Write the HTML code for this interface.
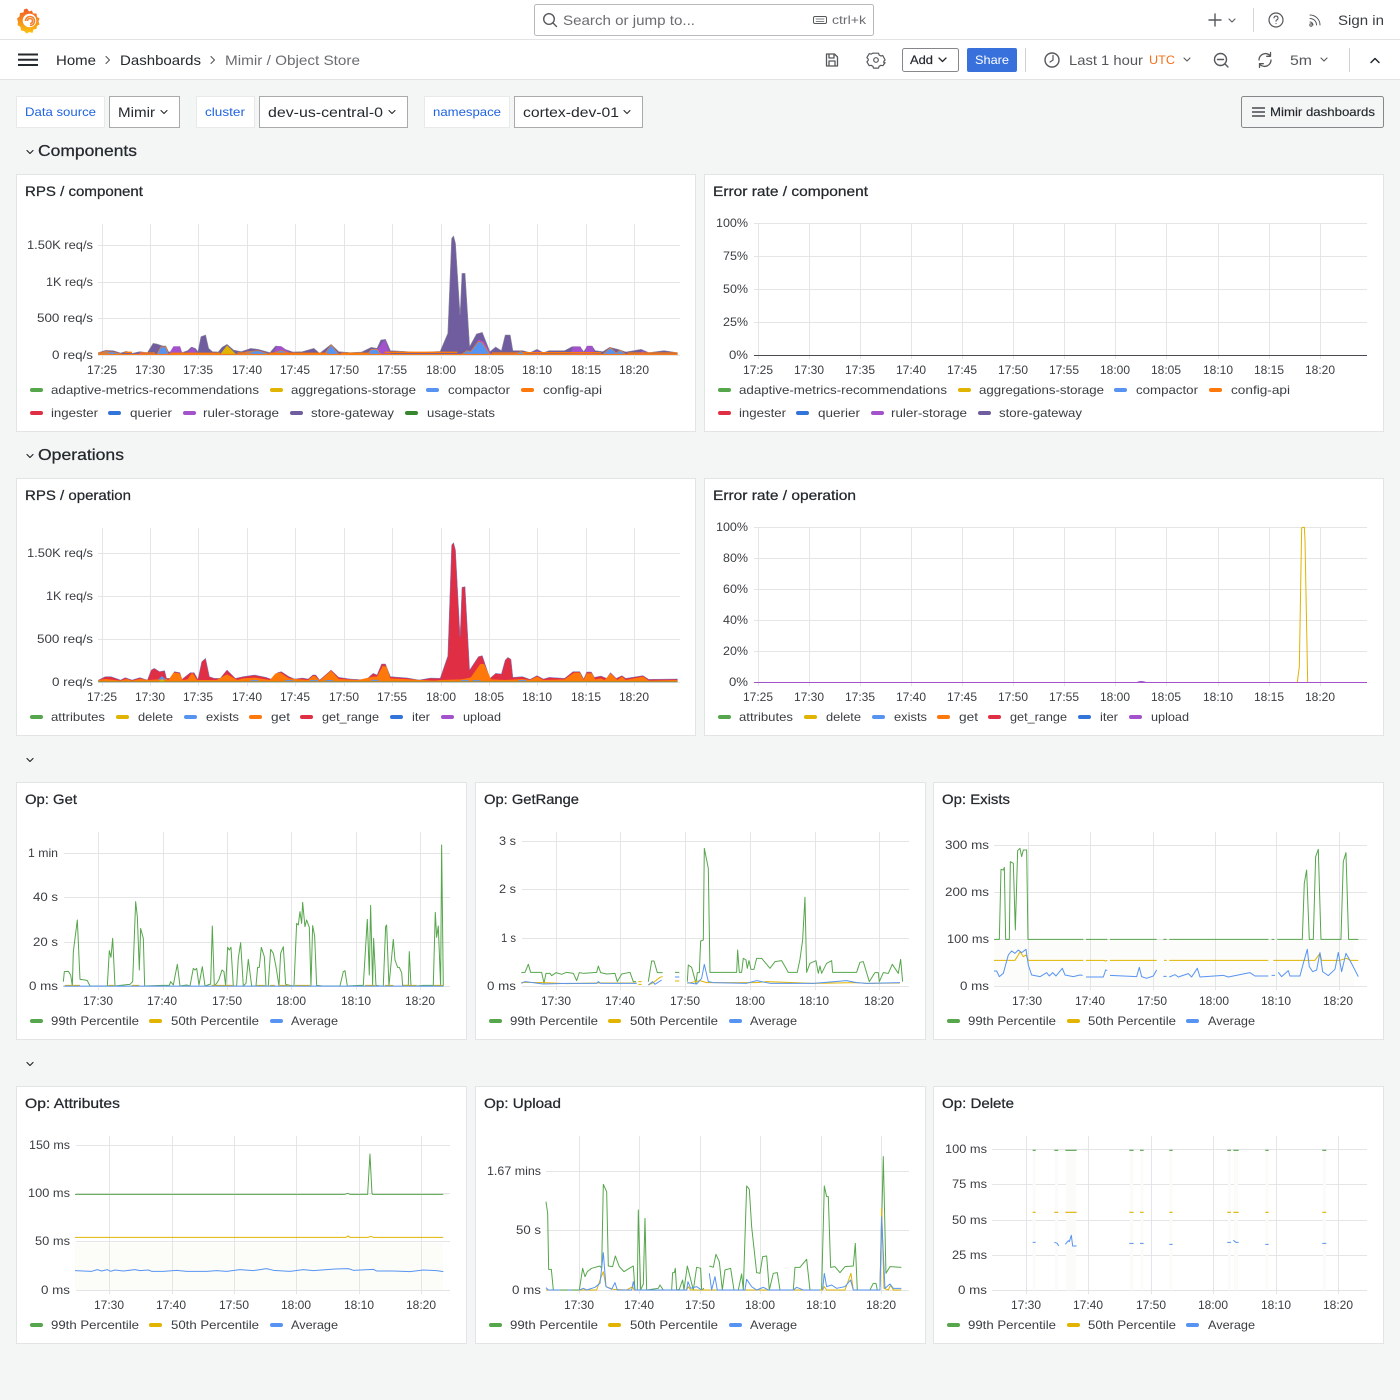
<!DOCTYPE html>
<html><head><meta charset="utf-8"><title>Mimir / Object Store</title>
<style>
html,body{margin:0;padding:0;background:#f4f5f5;width:1400px;height:1400px;overflow:hidden}
svg{display:block;font-family:"Liberation Sans",sans-serif;fill:#24292e;font-size:12px}
.g{fill:none;stroke:#e4e5e6;stroke-width:1;shape-rendering:crispEdges}
.p{fill:#fff;stroke:#e3e4e5;stroke-width:1;shape-rendering:crispEdges}
.t{font-size:14px;stroke:#24292e;stroke-width:.25}
.h{font-size:16px;stroke:#24292e;stroke-width:.25}
.m{font-size:14px}
.s{fill:#6a6d70}
.e{text-anchor:end;fill:#3a3e42}
.c{text-anchor:middle;fill:#3a3e42}
.l{fill:#3a3e42}
.b{fill:#1f62e0}
.k{stroke-width:4;stroke-linecap:round;fill:none}
.i{fill:none;stroke:#55585b;stroke-width:1.4;stroke-linecap:round;stroke-linejoin:round}
.d{fill:none;stroke:#24292e;stroke-width:1.3;stroke-linecap:round;stroke-linejoin:round}
.n path,.n polyline{fill:none;stroke-width:1;vector-effect:non-scaling-stroke;stroke-linejoin:round}
.gr{stroke:#56a64b}.ye{stroke:#e0b400}.bl{stroke:#5794f2}
</style></head><body>
<svg width="1400" height="1400" viewBox="0 0 1400 1400" xmlns="http://www.w3.org/2000/svg">
<defs><linearGradient id="lg" x1="0" y1="1" x2="0" y2="0"><stop offset="0" stop-color="#fcc40f"/><stop offset="1" stop-color="#f05a28"/></linearGradient></defs>

<!-- top bars -->
<rect x="0" y="0" width="1400" height="80" fill="#fff"/>
<rect x="0" y="39" width="1400" height="1" fill="#e3e4e5"/>
<rect x="0" y="79" width="1400" height="1" fill="#e3e4e5"/>

<!-- logo -->
<g transform="translate(2,0)">
<path fill="url(#lg)" d="M25 8.500l2 3 3-1 1 3 3.500 0 .5 3.500 2.500 1.500-1 3 1 3-2.500 1.500-.5 3-3 .5-1 3.500-3-1-3 1.500-2.500-2.500-3-.5-.5-3.500-3-2 .5-3-1-3.500 2.500-2 .5-3.500 3.500-.5 .5-3z"/>
<circle cx="27.500" cy="20.500" r="6.800" fill="#fff"/>
<path d="M23.500 21a4.500 4.500 0 1 1 4.500 4.500M25.500 21a2.500 2.500 0 1 1 2.500 2.500" fill="none" stroke="#f4802a" stroke-width="1.600"/>
</g>

<!-- search -->
<rect x="534.500" y="4.500" width="339" height="31" rx="2" fill="#fff" stroke="#b9babc"/>
<circle cx="549" cy="19" r="5.300" class="i"/><path d="M553 23l3.500 3.500" class="i"/>
<text x="563" y="25" class="m s" textLength="132" lengthAdjust="spacingAndGlyphs">Search or jump to...</text>
<rect x="813.500" y="16.500" width="13" height="7" rx="1.500" class="i" style="stroke-width:1"/><path d="M816 19h8M816 21.500h8" class="i" style="stroke-width:.8"/>
<text x="832" y="24" class="s" textLength="34" lengthAdjust="spacingAndGlyphs">ctrl+k</text>

<!-- top right -->
<path d="M1215 14v12M1209 20h12" class="i"/><path d="M1229 19l3 3 3-3" class="i" style="stroke-width:1.100"/>
<rect x="1253" y="8" width="1" height="24" fill="#d4d5d6"/>
<circle cx="1276" cy="20" r="7" class="i" style="stroke-width:1.200"/><path d="M1274 18a2 2 0 1 1 2.500 2c-.5.300-.5.700-.5 1.200M1276 23.500v.1" class="i" style="stroke-width:1.100"/>
<path d="M1310 15c5.500 0 10 4.500 10 10M1310 18.500c3.600 0 6.500 2.900 6.500 6.500M1310 22c1.700 0 3 1.300 3 3" class="i" style="stroke-width:1"/><circle cx="1311" cy="25" r="1.200" class="i" style="stroke-width:1"/>
<text x="1338" y="25" class="m" textLength="46" lengthAdjust="spacingAndGlyphs" style="fill:#3a3e42">Sign in</text>

<!-- nav bar -->
<path d="M18 54.500h20M18 59.800h20M18 65h20" stroke="#24292e" stroke-width="2" fill="none"/>
<text x="56" y="65" class="m" textLength="40" lengthAdjust="spacingAndGlyphs">Home</text>
<path d="M106 56.500l3.500 3.500-3.500 3.500" class="i" style="stroke-width:1.100"/>
<text x="120" y="65" class="m" textLength="81" lengthAdjust="spacingAndGlyphs">Dashboards</text>
<path d="M211 56.500l3.500 3.500-3.500 3.500" class="i" style="stroke-width:1.100"/>
<text x="225" y="65" class="m s" textLength="135" lengthAdjust="spacingAndGlyphs">Mimir / Object Store</text>

<path d="M826.500 54h8l3 3v9h-11zM829 54v4h5v-4M829 66v-5h6v5" class="i" style="stroke-width:1.300"/>
<circle cx="876" cy="60" r="2.300" class="i" style="stroke-width:1.200"/>
<path d="M873.500 53.200h5l.6 1.800 1.800 1 1.900-.4 2.300 4.400-1.300 1.300.0 1.400 1.300 0-2.300 3-1.900-.4-1.800 1-.6 1.800h-5l-.6-1.800-1.800-1-1.900.4-2.300-3.900 1.300-1.400v-1.400l-1.300-1.400 2.300-3.900 1.900.4 1.800-1z" class="i" style="stroke-width:1.200"/>

<rect x="902.500" y="48.500" width="56" height="23" rx="2" fill="#fff" stroke="#85878a"/>
<text x="910" y="64" textLength="23" lengthAdjust="spacingAndGlyphs" style="stroke:#24292e;stroke-width:.2">Add</text>
<path d="M939 58l3.500 3.500 3.500-3.500" class="d"/>
<rect x="967" y="48" width="50" height="24" rx="2" fill="#3871dc"/>
<text x="975" y="64" style="fill:#fff" textLength="34" lengthAdjust="spacingAndGlyphs">Share</text>
<rect x="1025" y="48" width="1" height="24" fill="#cfd0d1"/>

<circle cx="1052" cy="60" r="7" class="i"/><path d="M1053 55.500v4.500l-3 2" class="i" style="stroke-width:1.200"/>
<text x="1069" y="65" class="m" style="fill:#55585b" textLength="74" lengthAdjust="spacingAndGlyphs">Last 1 hour</text>
<text x="1149" y="64" style="fill:#f2701a" textLength="26" lengthAdjust="spacingAndGlyphs">UTC</text>
<path d="M1184 58l3 3 3-3" class="i" style="stroke-width:1.100"/>
<circle cx="1220.500" cy="59.500" r="6" class="i"/><path d="M1225 64l3 3M1217.500 59.500h6" class="i"/>
<path d="M1259 60a6.500 6.500 0 0 1 10.500-5l1 1M1271 60a6.500 6.500 0 0 1-10.500 5l-1-1M1270.500 52.500v3.800h-3.800M1259.500 67.500v-3.800h3.800" class="i" style="stroke-width:1.300"/>
<text x="1290" y="65" class="m" style="fill:#55585b" textLength="22" lengthAdjust="spacingAndGlyphs">5m</text>
<path d="M1321 58l3 3 3-3" class="i" style="stroke-width:1.100"/>
<rect x="1349" y="48" width="1" height="24" fill="#cfd0d1"/>
<path d="M1371 62.500l4-4 4 4" class="d" style="stroke-width:1.500"/>

<!-- variables -->
<g style="shape-rendering:crispEdges">
<rect x="16.500" y="96.500" width="88" height="31" fill="#fff" stroke="#e8e9ea"/>
<rect x="109.500" y="96.500" width="70" height="31" fill="#fff" stroke="#a8aaac"/>
<rect x="196.500" y="96.500" width="58" height="31" fill="#fff" stroke="#e8e9ea"/>
<rect x="259.500" y="96.500" width="148" height="31" fill="#fff" stroke="#a8aaac"/>
<rect x="424.500" y="96.500" width="85" height="31" fill="#fff" stroke="#e8e9ea"/>
<rect x="514.500" y="96.500" width="128" height="31" fill="#fff" stroke="#a8aaac"/>
</g>
<text x="25" y="116" class="b" textLength="71" lengthAdjust="spacingAndGlyphs">Data source</text>
<text x="118" y="117" class="m" textLength="37" lengthAdjust="spacingAndGlyphs">Mimir</text>
<path d="M161 110.500l3 3 3-3" class="d" style="stroke-width:1.100"/>
<text x="205" y="116" class="b" textLength="40" lengthAdjust="spacingAndGlyphs">cluster</text>
<text x="268" y="117" class="m" textLength="115" lengthAdjust="spacingAndGlyphs">dev-us-central-0</text>
<path d="M389 110.500l3 3 3-3" class="d" style="stroke-width:1.100"/>
<text x="433" y="116" class="b" textLength="68" lengthAdjust="spacingAndGlyphs">namespace</text>
<text x="523" y="117" class="m" textLength="96" lengthAdjust="spacingAndGlyphs">cortex-dev-01</text>
<path d="M624 110.500l3 3 3-3" class="d" style="stroke-width:1.100"/>
<rect x="1241.500" y="96.500" width="142" height="31" rx="2" fill="#f4f5f5" stroke="#85878a"/>
<path d="M1252 108h13M1252 112h13M1252 116h13" stroke="#24292e" stroke-width="1.300" fill="none"/>
<text x="1270" y="116" textLength="105" lengthAdjust="spacingAndGlyphs" style="stroke:#24292e;stroke-width:.15">Mimir dashboards</text>

<!-- section headers -->
<path d="M27 150.500l3 3 3-3" class="d" style="stroke-width:1.200"/>
<text x="38" y="156" class="h" textLength="99" lengthAdjust="spacingAndGlyphs">Components</text>
<path d="M27 454.500l3 3 3-3" class="d" style="stroke-width:1.200"/>
<text x="38" y="460" class="h" textLength="86" lengthAdjust="spacingAndGlyphs">Operations</text>
<path d="M27 758.500l3 3 3-3" class="d" style="stroke-width:1.200"/>
<path d="M27 1062.500l3 3 3-3" class="d" style="stroke-width:1.200"/>

<!-- panels -->
<rect class="p" x="16.500" y="174.500" width="679" height="257"/>
<rect class="p" x="704.500" y="174.500" width="679" height="257"/>
<rect class="p" x="16.500" y="478.500" width="679" height="257"/>
<rect class="p" x="704.500" y="478.500" width="679" height="257"/>
<rect class="p" x="16.500" y="782.500" width="450" height="257"/>
<rect class="p" x="475.500" y="782.500" width="450" height="257"/>
<rect class="p" x="933.500" y="782.500" width="450" height="257"/>
<rect class="p" x="16.500" y="1086.500" width="450" height="257"/>
<rect class="p" x="475.500" y="1086.500" width="450" height="257"/>
<rect class="p" x="933.500" y="1086.500" width="450" height="257"/>

<text x="25" y="196" class="t" textLength="118" lengthAdjust="spacingAndGlyphs">RPS / component</text>
<text x="713" y="196" class="t" textLength="155" lengthAdjust="spacingAndGlyphs">Error rate / component</text>
<text x="25" y="500" class="t" textLength="106" lengthAdjust="spacingAndGlyphs">RPS / operation</text>
<text x="713" y="500" class="t" textLength="143" lengthAdjust="spacingAndGlyphs">Error rate / operation</text>
<text x="25" y="804" class="t" textLength="52" lengthAdjust="spacingAndGlyphs">Op: Get</text>
<text x="484" y="804" class="t" textLength="95" lengthAdjust="spacingAndGlyphs">Op: GetRange</text>
<text x="942" y="804" class="t" textLength="68" lengthAdjust="spacingAndGlyphs">Op: Exists</text>
<text x="25" y="1108" class="t" textLength="95" lengthAdjust="spacingAndGlyphs">Op: Attributes</text>
<text x="484" y="1108" class="t" textLength="77" lengthAdjust="spacingAndGlyphs">Op: Upload</text>
<text x="942" y="1108" class="t" textLength="72" lengthAdjust="spacingAndGlyphs">Op: Delete</text>

<!-- CHART 1: RPS / component -->
<path class="g" d="M98 245.500H680M98 282.500H680M98 318.500H680M98 355.500H680M102.500 224V359M150.500 224V359M198.500 224V359M247.500 224V359M295.500 224V359M344.500 224V359M392.500 224V359M441.500 224V359M489.500 224V359M537.500 224V359M586.500 224V359M634.500 224V359"/>
<g transform="translate(90,220) scale(.3827,.3333)">
<polygon fill="#705da0" stroke="#8b8b98" stroke-width="1.500" points="22,398 40,391 60,392 80,399 95,394 110,400 130,395 150,398 165,370 175,372 190,378 198,378 205,395 215,398 220,380 235,380 240,398 255,392 265,381 275,385 282,395 290,350 302,345 310,385 320,395 335,396 345,382 358,373 375,390 395,395 420,385 440,388 470,398 485,378 500,380 510,388 530,396 555,395 570,390 585,385 600,400 630,373 650,395 680,398 710,396 735,382 750,385 760,360 772,358 785,392 820,394 860,398 900,395 915,394 935,340 945,55 950,48 955,70 967,285 972,160 980,160 992,380 1010,342 1025,337 1045,395 1060,381 1075,392 1085,345 1098,345 1105,392 1130,392 1150,398 1168,388 1185,398 1200,392 1240,392 1260,380 1280,380 1290,395 1300,378 1312,378 1320,392 1340,395 1358,382 1380,388 1400,396 1440,388 1460,398 1500,392 1535,398 1535,404 22,404"/>
<g fill="#a352cc">
<polygon points="205,403 218,379 235,379 242,403"/><polygon points="250,403 268,381 282,403"/>
<polygon points="478,403 488,378 500,379 512,390 532,403"/><polygon points="740,403 758,378 770,358 785,403"/>
<polygon points="995,403 1015,358 1030,365 1048,403"/><polygon points="1255,403 1262,380 1282,380 1290,403"/><polygon points="1290,403 1298,378 1312,378 1320,403"/>
<polygon points="125,403 132,395 150,403"/><polygon points="1160,403 1168,390 1180,403"/><polygon points="1435,403 1445,390 1455,403"/>
</g>
<polygon fill="#5794f2" stroke="#ff780a" stroke-width="1.800" points="22,403 40,394 60,396 85,403 175,403 185,381 198,381 205,403 395,403 410,395 440,392 470,403 500,391 520,399 560,403 612,403 630,375 650,403 725,403 735,388 750,388 760,403 970,403 985,392 995,394 1015,364 1025,368 1045,403 1110,403 1125,394 1140,403 1340,403 1360,383 1375,399 1385,390 1400,403 1535,403"/>
<polygon fill="#e0b400" points="340,403 358,376 382,403"/>
<path d="M22,399 H50 M90,397 H110 M130,399 H170 M210,400 H340 M385,399 H420 M470,400 H620 M655,400 H730 M770,397 H960 M1050,399 H1120 M1130,398 H1335 M1405,399 H1535" stroke="#ff780a" stroke-width="4" fill="none"/>
<path d="M22,403 H1535" stroke="#ff780a" stroke-width="3" fill="none"/>
</g>
<g class="e">
<text x="93" y="249" textLength="66" lengthAdjust="spacingAndGlyphs">1.50K req/s</text>
<text x="93" y="286" textLength="47" lengthAdjust="spacingAndGlyphs">1K req/s</text>
<text x="93" y="322" textLength="56" lengthAdjust="spacingAndGlyphs">500 req/s</text>
<text x="93" y="359" textLength="41" lengthAdjust="spacingAndGlyphs">0 req/s</text>
</g>
<g class="c"><text x="102" y="374">17:25</text><text x="150" y="374">17:30</text><text x="198" y="374">17:35</text><text x="247" y="374">17:40</text><text x="295" y="374">17:45</text><text x="344" y="374">17:50</text><text x="392" y="374">17:55</text><text x="441" y="374">18:00</text><text x="489" y="374">18:05</text><text x="537" y="374">18:10</text><text x="586" y="374">18:15</text><text x="634" y="374">18:20</text></g>
<g class="l">
<text x="51" y="394" textLength="208" lengthAdjust="spacingAndGlyphs">adaptive-metrics-recommendations</text>
<text x="291" y="394" textLength="125" lengthAdjust="spacingAndGlyphs">aggregations-storage</text>
<text x="448" y="394" textLength="62" lengthAdjust="spacingAndGlyphs">compactor</text>
<text x="543" y="394" textLength="59" lengthAdjust="spacingAndGlyphs">config-api</text>
<text x="51" y="417" textLength="47" lengthAdjust="spacingAndGlyphs">ingester</text>
<text x="130" y="417" textLength="42" lengthAdjust="spacingAndGlyphs">querier</text>
<text x="203" y="417" textLength="76" lengthAdjust="spacingAndGlyphs">ruler-storage</text>
<text x="311" y="417" textLength="83" lengthAdjust="spacingAndGlyphs">store-gateway</text>
<text x="427" y="417" textLength="68" lengthAdjust="spacingAndGlyphs">usage-stats</text>
</g>
<path class="k" stroke="#56a64b" d="M32 390h9"/><path class="k" stroke="#e0b400" d="M272 390h9"/><path class="k" stroke="#5794f2" d="M428 390h9"/><path class="k" stroke="#ff780a" d="M523 390h9"/>
<path class="k" stroke="#e02f44" d="M32 413h9"/><path class="k" stroke="#3274d9" d="M110 413h9"/><path class="k" stroke="#a352cc" d="M185 413h9"/><path class="k" stroke="#705da0" d="M292 413h9"/><path class="k" stroke="#37872d" d="M407 413h9"/>

<!-- CHART 2: Error rate / component -->
<path class="g" d="M754 223.500H1367M754 256.500H1367M754 289.500H1367M754 322.500H1367M758.500 223V359M809.500 223V359M860.500 223V359M911.500 223V359M962.500 223V359M1013.500 223V359M1064.500 223V359M1115.500 223V359M1166.500 223V359M1218.500 223V359M1269.500 223V359M1320.500 223V359"/>
<path d="M754 355.500H1367" stroke="#4a4a55" stroke-width="1" style="shape-rendering:crispEdges"/>
<g class="e">
<text x="748" y="227" textLength="32" lengthAdjust="spacingAndGlyphs">100%</text>
<text x="748" y="260" textLength="25" lengthAdjust="spacingAndGlyphs">75%</text>
<text x="748" y="293" textLength="25" lengthAdjust="spacingAndGlyphs">50%</text>
<text x="748" y="326" textLength="25" lengthAdjust="spacingAndGlyphs">25%</text>
<text x="748" y="359" textLength="19" lengthAdjust="spacingAndGlyphs">0%</text>
</g>
<g class="c"><text x="758" y="374">17:25</text><text x="809" y="374">17:30</text><text x="860" y="374">17:35</text><text x="911" y="374">17:40</text><text x="962" y="374">17:45</text><text x="1013" y="374">17:50</text><text x="1064" y="374">17:55</text><text x="1115" y="374">18:00</text><text x="1166" y="374">18:05</text><text x="1218" y="374">18:10</text><text x="1269" y="374">18:15</text><text x="1320" y="374">18:20</text></g>
<g class="l">
<text x="739" y="394" textLength="208" lengthAdjust="spacingAndGlyphs">adaptive-metrics-recommendations</text>
<text x="979" y="394" textLength="125" lengthAdjust="spacingAndGlyphs">aggregations-storage</text>
<text x="1136" y="394" textLength="62" lengthAdjust="spacingAndGlyphs">compactor</text>
<text x="1231" y="394" textLength="59" lengthAdjust="spacingAndGlyphs">config-api</text>
<text x="739" y="417" textLength="47" lengthAdjust="spacingAndGlyphs">ingester</text>
<text x="818" y="417" textLength="42" lengthAdjust="spacingAndGlyphs">querier</text>
<text x="891" y="417" textLength="76" lengthAdjust="spacingAndGlyphs">ruler-storage</text>
<text x="999" y="417" textLength="83" lengthAdjust="spacingAndGlyphs">store-gateway</text>
</g>
<path class="k" stroke="#56a64b" d="M720 390h9"/><path class="k" stroke="#e0b400" d="M960 390h9"/><path class="k" stroke="#5794f2" d="M1116 390h9"/><path class="k" stroke="#ff780a" d="M1211 390h9"/>
<path class="k" stroke="#e02f44" d="M720 413h9"/><path class="k" stroke="#3274d9" d="M798 413h9"/><path class="k" stroke="#a352cc" d="M873 413h9"/><path class="k" stroke="#705da0" d="M980 413h9"/>

<!-- CHART 3: RPS / operation -->
<path class="g" d="M98 553.500H680M98 596.500H680M98 639.500H680M98 682.500H680M102.500 528V686M150.500 528V686M198.500 528V686M247.500 528V686M295.500 528V686M344.500 528V686M392.500 528V686M441.500 528V686M489.500 528V686M537.500 528V686M586.500 528V686M634.500 528V686"/>
<g transform="translate(90,530) scale(.3827,.3333)">
<polygon fill="#e02f44" stroke="#5a7fd8" stroke-width="1.200" points="22,450 40,440 55,440 80,450 92,443 110,450 130,443 150,450 160,420 168,415 182,425 195,422 200,445 215,445 220,425 235,428 240,448 262,428 272,428 282,448 292,395 302,385 312,440 325,445 340,445 358,420 380,445 400,440 430,435 460,442 480,450 490,428 500,425 520,440 535,447 555,444 570,447 582,435 590,435 600,450 630,420 650,442 680,447 720,450 740,430 750,435 762,402 772,402 785,440 830,444 860,450 890,444 915,445 935,378 945,45 950,38 955,60 967,320 972,172 980,170 992,420 1015,380 1025,377 1045,445 1060,430 1075,432 1085,390 1092,382 1100,388 1105,442 1130,440 1150,448 1168,437 1185,447 1200,442 1240,445 1262,425 1280,425 1290,447 1298,426 1310,426 1318,442 1335,438 1350,445 1360,428 1375,445 1390,437 1400,445 1445,437 1460,448 1535,447 1535,456 22,456"/>
<polygon fill="#ff780a" points="22,450 40,447 80,452 95,447 110,452 130,447 155,450 178,448 195,445 205,450 218,428 235,430 242,450 255,448 267,428 280,450 310,450 330,450 358,433 385,450 400,445 430,443 470,450 485,430 497,428 520,445 570,450 582,438 588,438 600,452 630,422 650,447 700,450 740,440 750,440 765,408 775,410 785,445 900,452 915,450 970,448 985,445 995,442 1020,402 1030,402 1048,448 1085,450 1130,447 1150,450 1168,440 1185,450 1240,448 1265,428 1280,428 1290,450 1298,430 1312,430 1320,448 1335,445 1345,450 1360,430 1378,450 1390,440 1400,450 1445,440 1460,452 1535,450 1535,456 22,456"/>
<polygon fill="#5794f2" points="178,449 188,438 198,449"/><polygon fill="#e0b400" points="178,456 188,447 198,456"/>
<path d="M420,452H440M510,452H530M575,452H595M615,452H635M735,451H755M970,452H990M1000,452H1020M1120,452H1140" stroke="#5794f2" stroke-width="3" fill="none"/>
<path d="M22,455.500H1535" stroke="#6a9a40" stroke-width="2" fill="none"/>
</g>
<g class="e">
<text x="93" y="557" textLength="66" lengthAdjust="spacingAndGlyphs">1.50K req/s</text>
<text x="93" y="600" textLength="47" lengthAdjust="spacingAndGlyphs">1K req/s</text>
<text x="93" y="643" textLength="56" lengthAdjust="spacingAndGlyphs">500 req/s</text>
<text x="93" y="686" textLength="41" lengthAdjust="spacingAndGlyphs">0 req/s</text>
</g>
<g class="c"><text x="102" y="701">17:25</text><text x="150" y="701">17:30</text><text x="198" y="701">17:35</text><text x="247" y="701">17:40</text><text x="295" y="701">17:45</text><text x="344" y="701">17:50</text><text x="392" y="701">17:55</text><text x="441" y="701">18:00</text><text x="489" y="701">18:05</text><text x="537" y="701">18:10</text><text x="586" y="701">18:15</text><text x="634" y="701">18:20</text></g>
<g class="l">
<text x="51" y="721" textLength="54" lengthAdjust="spacingAndGlyphs">attributes</text>
<text x="138" y="721" textLength="35" lengthAdjust="spacingAndGlyphs">delete</text>
<text x="206" y="721" textLength="33" lengthAdjust="spacingAndGlyphs">exists</text>
<text x="271" y="721" textLength="19" lengthAdjust="spacingAndGlyphs">get</text>
<text x="322" y="721" textLength="57" lengthAdjust="spacingAndGlyphs">get_range</text>
<text x="412" y="721" textLength="18" lengthAdjust="spacingAndGlyphs">iter</text>
<text x="463" y="721" textLength="38" lengthAdjust="spacingAndGlyphs">upload</text>
</g>
<path class="k" stroke="#56a64b" d="M32 717h9"/><path class="k" stroke="#e0b400" d="M118 717h9"/><path class="k" stroke="#5794f2" d="M186 717h9"/><path class="k" stroke="#ff780a" d="M251 717h9"/><path class="k" stroke="#e02f44" d="M302 717h9"/><path class="k" stroke="#3274d9" d="M392 717h9"/><path class="k" stroke="#a352cc" d="M443 717h9"/>

<!-- CHART 4: Error rate / operation -->
<path class="g" d="M754 527.500H1367M754 558.500H1367M754 589.500H1367M754 620.500H1367M754 651.500H1367M758.500 527V686M809.500 527V686M860.500 527V686M911.500 527V686M962.500 527V686M1013.500 527V686M1064.500 527V686M1115.500 527V686M1166.500 527V686M1218.500 527V686M1269.500 527V686M1320.500 527V686"/>
<path d="M754 682.500H1367" stroke="#a352cc" stroke-width="1" style="shape-rendering:crispEdges"/>
<path d="M1137 682.500q4-2 9 0" stroke="#a352cc" fill="none"/>
<g class="n" transform="translate(1230,500) scale(.3333)"><polyline class="ye" points="202,546 208,500 215,85 217,82 223,82 225,120 233,546"/></g>
<g class="e">
<text x="748" y="531" textLength="32" lengthAdjust="spacingAndGlyphs">100%</text>
<text x="748" y="562" textLength="25" lengthAdjust="spacingAndGlyphs">80%</text>
<text x="748" y="593" textLength="25" lengthAdjust="spacingAndGlyphs">60%</text>
<text x="748" y="624" textLength="25" lengthAdjust="spacingAndGlyphs">40%</text>
<text x="748" y="655" textLength="25" lengthAdjust="spacingAndGlyphs">20%</text>
<text x="748" y="686" textLength="19" lengthAdjust="spacingAndGlyphs">0%</text>
</g>
<g class="c"><text x="758" y="701">17:25</text><text x="809" y="701">17:30</text><text x="860" y="701">17:35</text><text x="911" y="701">17:40</text><text x="962" y="701">17:45</text><text x="1013" y="701">17:50</text><text x="1064" y="701">17:55</text><text x="1115" y="701">18:00</text><text x="1166" y="701">18:05</text><text x="1218" y="701">18:10</text><text x="1269" y="701">18:15</text><text x="1320" y="701">18:20</text></g>
<g class="l">
<text x="739" y="721" textLength="54" lengthAdjust="spacingAndGlyphs">attributes</text>
<text x="826" y="721" textLength="35" lengthAdjust="spacingAndGlyphs">delete</text>
<text x="894" y="721" textLength="33" lengthAdjust="spacingAndGlyphs">exists</text>
<text x="959" y="721" textLength="19" lengthAdjust="spacingAndGlyphs">get</text>
<text x="1010" y="721" textLength="57" lengthAdjust="spacingAndGlyphs">get_range</text>
<text x="1100" y="721" textLength="18" lengthAdjust="spacingAndGlyphs">iter</text>
<text x="1151" y="721" textLength="38" lengthAdjust="spacingAndGlyphs">upload</text>
</g>
<path class="k" stroke="#56a64b" d="M720 717h9"/><path class="k" stroke="#e0b400" d="M806 717h9"/><path class="k" stroke="#5794f2" d="M874 717h9"/><path class="k" stroke="#ff780a" d="M939 717h9"/><path class="k" stroke="#e02f44" d="M990 717h9"/><path class="k" stroke="#3274d9" d="M1080 717h9"/><path class="k" stroke="#a352cc" d="M1131 717h9"/>

<!-- Op: Get -->
<path class="g" d="M64 853.500H450M64 897.500H450M64 942.500H450M64 986.500H450M98.500 832V990M163.500 832V990M227.500 832V990M291.500 832V990M356.500 832V990M420.500 832V990"/>
<g class="n" transform="translate(20,830) scale(.3333)">
<polyline class="gr" points="130,455 133,425 145,424 152,435 157,468 160,365 172,270 180,448 195,450 202,452 210,468 262,468 268,362 273,382 278,325 285,468 330,463 338,455 347,215 352,260 358,420 362,295 370,325 374,468 428,466 448,466 452,455 460,465 472,403 480,468 500,465 510,468 520,415 525,420 530,415 537,465 547,410 555,468 572,462 577,288 583,468 590,460 597,448 606,420 612,425 617,468 623,352 628,360 633,352 640,468 650,468 655,385 662,338 670,468 678,460 685,388 695,468 708,468 713,412 718,412 724,352 733,380 738,468 745,468 752,358 760,370 768,410 777,468 782,370 790,350 797,463 810,466 822,468 830,280 835,285 840,245 845,280 848,217 855,290 860,270 868,292 873,468 878,287 884,318 890,466 908,468 960,468 970,425 975,422 982,468 1020,466 1030,466 1042,268 1048,435 1052,226 1058,466 1061,325 1068,466 1080,468 1090,468 1097,290 1100,285 1107,468 1120,328 1125,390 1133,412 1138,412 1145,428 1148,466 1165,466 1168,365 1173,466 1190,468 1210,466 1225,466 1240,466 1246,247 1250,322 1255,288 1262,468 1265,45 1270,468"/>
<path class="ye" d="M135,467H180M265,467H282M335,467H358M575,467H640M710,467H735M750,467H765M775,467H810M825,467H870M1035,467H1065M1095,467H1120M1150,467H1190M1240,467H1270" style="stroke-width:1.500"/>
<path class="bl" d="M130,468.500H1270"/>
</g>
<g class="e"><text x="58" y="857" textLength="30" lengthAdjust="spacingAndGlyphs">1 min</text><text x="58" y="901" textLength="25" lengthAdjust="spacingAndGlyphs">40 s</text><text x="58" y="946" textLength="25" lengthAdjust="spacingAndGlyphs">20 s</text><text x="58" y="990" textLength="29" lengthAdjust="spacingAndGlyphs">0 ms</text></g>
<g class="c"><text x="98" y="1005">17:30</text><text x="162" y="1005">17:40</text><text x="227" y="1005">17:50</text><text x="291" y="1005">18:00</text><text x="356" y="1005">18:10</text><text x="420" y="1005">18:20</text></g>

<!-- Op: GetRange -->
<path class="g" d="M522 841.500H909M522 889.500H909M522 938.500H909M522 986.500H909M556.500 832V990M620.500 832V990M685.500 832V990M750.500 832V990M815.500 832V990M879.500 832V990"/>
<g class="n" transform="translate(480,830) scale(.3333)">
<path class="gr" d="M124,428 135,427 145,403 152,427 185,427 192,460 198,430 210,430 215,437 228,428 245,433 260,427 280,430 290,452 298,428 310,430 350,427 355,408 362,428 380,432 405,430 412,455 425,432 450,427 460,455 468,455M505,455 515,393 522,393 532,428 548,428M585,427H598M622,455 625,405 635,412 648,460 652,428 658,428 662,333 670,330 673,55 685,115 690,427 770,427 773,360 778,427 785,427 790,385 798,390 802,415 807,392 813,418 822,418 830,385 845,385 870,415 885,395 905,392 925,427 952,427 960,388 968,330 975,202 980,427 990,400 1008,392 1015,430 1020,408 1025,430 1040,400 1055,392 1058,427 1130,427 1140,397 1150,395 1168,455 1185,428 1195,428 1198,455 1210,428 1225,430 1237,403 1255,430 1262,388 1268,455"/>
<path class="ye" d="M124,457 190,458 260,461 350,459 470,459M475,455H485M475,463H485M505,465 520,458 540,442 548,440M585,453H598M622,460 660,452 680,458 830,458 860,455 1000,460 1130,458 1160,460 1260,459"/>
<path class="bl" d="M124,460 135,455 190,462 260,460 350,460 355,455 362,460 470,460M505,465 518,455 525,463 545,450M585,441H598M622,458 650,462 665,445 673,403 685,455 700,458 800,460 830,452 870,460 1000,460 1100,452 1130,458 1160,460 1260,458"/>
</g>
<g class="e"><text x="516" y="845" textLength="17" lengthAdjust="spacingAndGlyphs">3 s</text><text x="516" y="893" textLength="17" lengthAdjust="spacingAndGlyphs">2 s</text><text x="516" y="942" textLength="15" lengthAdjust="spacingAndGlyphs">1 s</text><text x="516" y="990" textLength="29" lengthAdjust="spacingAndGlyphs">0 ms</text></g>
<g class="c"><text x="556" y="1005">17:30</text><text x="620" y="1005">17:40</text><text x="685" y="1005">17:50</text><text x="750" y="1005">18:00</text><text x="814" y="1005">18:10</text><text x="879" y="1005">18:20</text></g>

<!-- Op: Exists -->
<rect x="994" y="939" width="360" height="47" fill="#fcfcfa"/>
<path class="g" d="M994 845.500H1367M994 892.500H1367M994 939.500H1367M994 986.500H1367M1028.500 832V990M1090.500 832V990M1153.500 832V990M1215.500 832V990M1276.500 832V990M1339.500 832V990"/>
<g class="n" transform="translate(940,830) scale(.3333)">
<path class="gr" d="M162,328H178L183,118 190,120 193,112 197,328 208,328 211,95 220,100 226,300 233,62 240,55 245,80 250,60 260,60 264,328H430M438,328H502M510,328H650M670,328H680M688,328H985M995,328H1003M1012,328H1087L1093,160 1100,120 1108,328 1120,328 1127,80 1135,58 1143,328 1203,328 1210,95 1218,68 1226,328H1255"/>
<path class="ye" d="M162,391H225L235,375 240,365 250,380 258,375 265,391H430M438,391H490L497,393 502,391M510,391H650M672,391H680M688,391H985M1000,391H1125L1140,370 1145,391H1200L1220,385 1230,391H1255"/>
<path class="bl" d="M162,423 170,423 178,440 190,430 205,375 215,363 225,370 235,360 245,368 258,358 265,405 275,435 300,440 320,428 328,438 338,428 348,438 367,415 375,435 400,440 420,435 428,436M438,441 490,441 497,420 502,421M510,436 590,440 598,412 605,440 620,445 640,438 650,420M670,439H680M688,441 705,434 715,441 745,431 755,441 772,415 780,441 850,436 865,441 930,428 945,438 985,438M995,436H1005M1015,427 1025,440 1045,422 1050,438 1080,438 1090,400 1102,358 1108,410 1118,425 1130,420 1140,368 1148,425 1165,437 1185,418 1195,367 1205,425 1218,370 1232,395 1255,440"/>
</g>
<g class="e"><text x="989" y="849" textLength="44" lengthAdjust="spacingAndGlyphs">300 ms</text><text x="989" y="896" textLength="44" lengthAdjust="spacingAndGlyphs">200 ms</text><text x="989" y="943" textLength="42" lengthAdjust="spacingAndGlyphs">100 ms</text><text x="989" y="990" textLength="29" lengthAdjust="spacingAndGlyphs">0 ms</text></g>
<g class="c"><text x="1027" y="1005">17:30</text><text x="1090" y="1005">17:40</text><text x="1152" y="1005">17:50</text><text x="1214" y="1005">18:00</text><text x="1276" y="1005">18:10</text><text x="1338" y="1005">18:20</text></g>

<!-- Op: Attributes -->
<rect x="75" y="1243" width="368" height="47" fill="#fcfcf9"/>
<path class="g" d="M76 1145.500H450M76 1193.500H450M76 1241.500H450M76 1290.500H450M109.500 1136V1294M172.500 1136V1294M234.500 1136V1294M296.500 1136V1294M359.500 1136V1294M421.500 1136V1294"/>
<g class="n" transform="translate(20,1130) scale(.3333)">
<polyline class="gr" points="165,193 975,193 983,190 990,193 1043,193 1050,72 1056,190 1058,193 1270,193"/>
<polyline class="ye" points="165,322 978,322 985,318 990,322 1045,322 1052,319 1060,322 1270,322"/>
<polyline class="bl" points="165,422 190,423 215,424 232,419 245,423 262,419 272,424 285,420 310,423 345,419 360,422 385,420 395,424 430,424 470,421 500,424 560,424 590,422 620,424 660,419 700,422 740,416 760,421 810,424 850,419 880,422 945,417 985,416 1000,421 1060,418 1070,423 1120,423 1170,425 1210,420 1250,422 1270,425"/>
</g>
<g class="e"><text x="70" y="1149" textLength="41" lengthAdjust="spacingAndGlyphs">150 ms</text><text x="70" y="1197" textLength="42" lengthAdjust="spacingAndGlyphs">100 ms</text><text x="70" y="1245" textLength="35" lengthAdjust="spacingAndGlyphs">50 ms</text><text x="70" y="1294" textLength="29" lengthAdjust="spacingAndGlyphs">0 ms</text></g>
<g class="c"><text x="109" y="1309">17:30</text><text x="171" y="1309">17:40</text><text x="234" y="1309">17:50</text><text x="296" y="1309">18:00</text><text x="359" y="1309">18:10</text><text x="421" y="1309">18:20</text></g>

<!-- Op: Upload -->
<path class="g" d="M546 1171.500H909M546 1230.500H909M546 1290.500H909M579.500 1136V1294M639.500 1136V1294M700.500 1136V1294M760.500 1136V1294M821.500 1136V1294M881.500 1136V1294"/>
<g class="n" transform="translate(480,1130) scale(.3333)">
<path class="gr" d="M198,215 203,250 206,418 214,418 220,480H298L308,415 315,440 322,425 335,415 360,408 365,415 370,163 380,185 385,408 398,410 406,378 418,410 432,425 448,415 460,408 465,480 472,480 475,240 482,480 490,462 495,265 500,480 535,475 540,465 550,480 575,480 578,428 583,428 586,415 590,480 598,478 608,450 612,480 622,408 630,440 640,480 650,412 662,415 665,480 672,475M688,408 700,412 708,373 718,395 727,480 735,420 752,415 762,480 775,480 785,432 790,480 800,168 808,178 815,290 830,428 840,430 848,380 860,378 868,480 880,430 892,428 900,480 940,480 945,412 960,412 980,388 990,480 1025,480 1033,168 1040,200 1045,200 1052,412 1065,410 1080,428 1095,410 1120,408 1126,340 1132,480 1170,480 1180,460 1188,460 1192,480 1200,480 1210,80 1218,430 1230,410 1264,412"/>
<path class="ye" d="M198,480H220M298,480H350L362,445 370,425 378,470 400,478 440,480 458,470 462,480H620L625,470 632,480H688L695,480H1028L1033,470 1040,480H1095L1113,430 1120,480H1200L1205,235 1212,475 1225,480 1232,465 1240,480H1264"/>
<path class="bl" d="M198,473 205,480H240M265,480H275M298,480 310,475 320,480 345,472 360,460 370,368 378,470 395,478 405,458 412,480H455L460,455 465,480H620L624,455 632,475 650,470 665,480M688,430 695,480 705,440 712,480H795L800,448 815,470 830,480 850,472 865,480H940L950,472 970,480H1020M1028,480 1033,430 1040,470 1055,465 1070,475 1095,470 1112,450 1120,480H1200L1205,260 1215,475 1230,462 1240,475 1264,475"/>
</g>
<g class="e"><text x="541" y="1175" textLength="54" lengthAdjust="spacingAndGlyphs">1.67 mins</text><text x="541" y="1234" textLength="25" lengthAdjust="spacingAndGlyphs">50 s</text><text x="541" y="1294" textLength="29" lengthAdjust="spacingAndGlyphs">0 ms</text></g>
<g class="c"><text x="579" y="1309">17:30</text><text x="639" y="1309">17:40</text><text x="700" y="1309">17:50</text><text x="760" y="1309">18:00</text><text x="821" y="1309">18:10</text><text x="881" y="1309">18:20</text></g>

<!-- Op: Delete -->
<path class="g" d="M992 1149.500H1367M992 1184.500H1367M992 1220.500H1367M992 1255.500H1367M992 1290.500H1367M1026.500 1136V1294M1088.500 1136V1294M1151.500 1136V1294M1213.500 1136V1294M1276.500 1136V1294M1338.500 1136V1294"/>
<g transform="translate(940,1130) scale(.3333)" fill="#fbfbf9">
<rect x="278" y="61" width="9" height="420"/><rect x="345" y="61" width="9" height="420"/><rect x="378" y="61" width="30" height="420"/><rect x="570" y="61" width="9" height="420"/><rect x="602" y="61" width="8" height="420"/><rect x="689" y="61" width="8" height="420"/><rect x="864" y="61" width="8" height="420"/><rect x="882" y="61" width="12" height="420"/><rect x="977" y="61" width="8" height="420"/><rect x="1149" y="61" width="9" height="420"/>
</g>
<g class="n" transform="translate(940,1130) scale(.3333)">
<path class="gr" style="stroke-width:1.200" d="M278,61H287M343,61H355M376,61H410M568,61H581M600,61H611M688,61H698M862,61H873M880,61H896M976,61H986M1147,61H1159"/>
<path class="ye" style="stroke-width:1.200" d="M278,247H287M343,247H355M376,247H410M568,247H581M600,247H611M688,247H698M862,247H873M880,247H896M976,247H986M1147,247H1159"/>
<path class="bl" d="M278,337H287M343,337 352,340 356,348M376,343 385,332 388,335 394,316 398,348H410M568,340H581M600,340H611M688,343H698M862,337H873M880,331 888,337H896M976,343H986M1147,340H1159"/>
</g>
<g class="e"><text x="987" y="1153" textLength="42" lengthAdjust="spacingAndGlyphs">100 ms</text><text x="987" y="1188" textLength="35" lengthAdjust="spacingAndGlyphs">75 ms</text><text x="987" y="1224" textLength="35" lengthAdjust="spacingAndGlyphs">50 ms</text><text x="987" y="1259" textLength="35" lengthAdjust="spacingAndGlyphs">25 ms</text><text x="987" y="1294" textLength="29" lengthAdjust="spacingAndGlyphs">0 ms</text></g>
<g class="c"><text x="1026" y="1309">17:30</text><text x="1088" y="1309">17:40</text><text x="1151" y="1309">17:50</text><text x="1213" y="1309">18:00</text><text x="1276" y="1309">18:10</text><text x="1338" y="1309">18:20</text></g>

<!-- percentile legends -->
<g class="l">
<text x="51" y="1025" textLength="88" lengthAdjust="spacingAndGlyphs">99th Percentile</text><text x="171" y="1025" textLength="88" lengthAdjust="spacingAndGlyphs">50th Percentile</text><text x="291" y="1025" textLength="47" lengthAdjust="spacingAndGlyphs">Average</text>
<text x="510" y="1025" textLength="88" lengthAdjust="spacingAndGlyphs">99th Percentile</text><text x="630" y="1025" textLength="88" lengthAdjust="spacingAndGlyphs">50th Percentile</text><text x="750" y="1025" textLength="47" lengthAdjust="spacingAndGlyphs">Average</text>
<text x="968" y="1025" textLength="88" lengthAdjust="spacingAndGlyphs">99th Percentile</text><text x="1088" y="1025" textLength="88" lengthAdjust="spacingAndGlyphs">50th Percentile</text><text x="1208" y="1025" textLength="47" lengthAdjust="spacingAndGlyphs">Average</text>
<text x="51" y="1329" textLength="88" lengthAdjust="spacingAndGlyphs">99th Percentile</text><text x="171" y="1329" textLength="88" lengthAdjust="spacingAndGlyphs">50th Percentile</text><text x="291" y="1329" textLength="47" lengthAdjust="spacingAndGlyphs">Average</text>
<text x="510" y="1329" textLength="88" lengthAdjust="spacingAndGlyphs">99th Percentile</text><text x="630" y="1329" textLength="88" lengthAdjust="spacingAndGlyphs">50th Percentile</text><text x="750" y="1329" textLength="47" lengthAdjust="spacingAndGlyphs">Average</text>
<text x="968" y="1329" textLength="88" lengthAdjust="spacingAndGlyphs">99th Percentile</text><text x="1088" y="1329" textLength="88" lengthAdjust="spacingAndGlyphs">50th Percentile</text><text x="1208" y="1329" textLength="47" lengthAdjust="spacingAndGlyphs">Average</text>
</g>
<path class="k" stroke="#56a64b" d="M32 1021h9M491 1021h9M949 1021h9M32 1325h9M491 1325h9M949 1325h9"/>
<path class="k" stroke="#e0b400" d="M151 1021h9M610 1021h9M1069 1021h9M151 1325h9M610 1325h9M1069 1325h9"/>
<path class="k" stroke="#5794f2" d="M272 1021h9M731 1021h9M1188 1021h9M272 1325h9M731 1325h9M1188 1325h9"/>
</svg>
</body></html>
